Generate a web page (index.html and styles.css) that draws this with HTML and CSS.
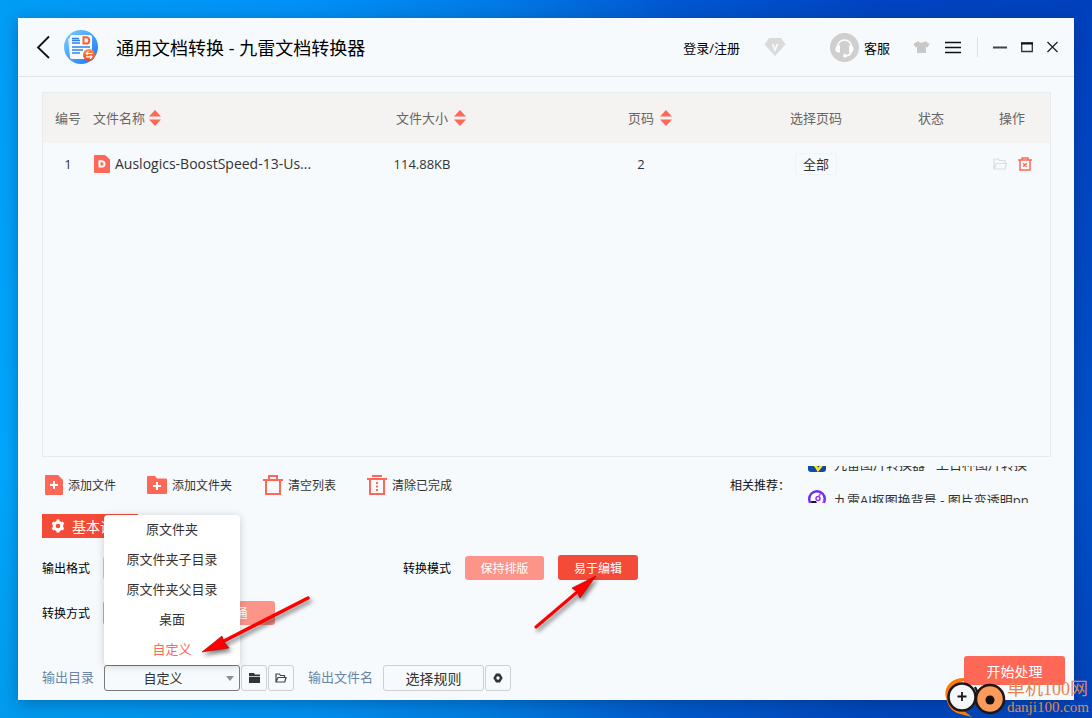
FILE: index.html
```html
<!DOCTYPE html>
<html lang="zh-CN">
<head>
<meta charset="utf-8">
<title>通用文档转换 - 九雷文档转换器</title>
<link rel="stylesheet" href="styles.css">
</head>
<body>
<div class="window">
  <header class="titlebar">
    <button class="plain" aria-label="返回"><svg width="14" height="24" viewBox="0 0 14 24"><path d="M13 1.500 2 12.500 13 23" fill="none" stroke="#111" stroke-width="1.800"/></svg></button>
    <svg class="logo" width="34" height="34" viewBox="0 0 34 34">
      <defs>
        <linearGradient id="disc" x1="0" y1="0" x2="1" y2="1"><stop offset="0" stop-color="#7dd0ff"/><stop offset="1" stop-color="#1672fb"/></linearGradient>
        <linearGradient id="dot" x1="0" y1="0" x2="0" y2="1"><stop offset="0" stop-color="#ff8a4e"/><stop offset="1" stop-color="#f4481a"/></linearGradient>
      </defs>
      <circle cx="17" cy="17" r="17" fill="url(#disc)"/>
      <path d="M4 9 8 7v21l-2-1z" fill="#d9ecff"/>
      <rect x="6" y="5" width="22" height="24" rx="2" fill="#f7faff"/>
      <path d="M8 8.500h7M8 10.500h8M8 13h8M8 17h18M8 20h11M8 23h8" stroke="#3182e8" stroke-width="1.500"/>
      <path d="M19.500 7.200h2.200c2.200 0 3.600 1.200 3.600 3.200s-1.400 3.200-3.600 3.200h-2.200z" fill="none" stroke="#f6622d" stroke-width="2"/>
      <circle cx="25" cy="25" r="6" fill="url(#dot)"/>
      <path d="M28.500 23.500h-6m2-2.200-2.200 2.200 1.500 1.200M22 26.800h6m-2 2 2-2-1.500-1.200" fill="none" stroke="#fff" stroke-width="1.200"/>
    </svg>
    <h1>通用文档转换 - 九雷文档转换器</h1>
    <nav class="top-actions">
      <a href="#login" class="login">登录/注册</a>
      <svg class="vip" width="22" height="20" viewBox="0 0 22 20"><path d="M5 1h12l4.500 6.500L11 19 .5 7.500z" fill="#dadada"/><path d="m8.500 7 2.500 6 2.500-6" fill="none" stroke="#f6fafc" stroke-width="1.800"/></svg>
      <a href="#support" class="support">
        <svg width="29" height="29" viewBox="0 0 29 29"><circle cx="14.500" cy="14.500" r="14.500" fill="#cfcfcf"/><path d="M7.500 17v-3a7 7 0 0 1 14 0v3c0 3.500-2 5.500-5.500 6" fill="none" stroke="#fff" stroke-width="1.600"/><path d="M8.500 12.500h1.500v7H8.500a3 3 0 0 1-3-3.500 3 3 0 0 1 3-3.500zM20.500 12.500H19v7h1.500a3 3 0 0 0 3-3.500 3 3 0 0 0-3-3.500z" fill="#fff"/><circle cx="15" cy="22.700" r="1.900" fill="#fff"/></svg>
        客服
      </a>
      <button class="plain skin" aria-label="换肤"><svg width="17" height="14" viewBox="0 0 17 14"><path d="M5 1 .5 4l2 3.500L4 6.800V13h9V6.800l1.500.7 2-3.500L12 1c-1 2-6 2-7 0z" fill="#c8c8c8"/></svg></button>
      <button class="plain menu-toggle" aria-label="菜单"><svg width="16" height="13" viewBox="0 0 16 13"><path d="M0 1.500h16M0 6.500h16M0 11.500h16" stroke="#111" stroke-width="1.600"/></svg></button>
      <span class="divider"></span>
      <button class="plain" aria-label="最小化"><svg width="14" height="12" viewBox="0 0 14 12"><path d="M0 6.500h14" stroke="#444" stroke-width="2"/></svg></button>
      <button class="plain" aria-label="最大化"><svg width="12" height="12" viewBox="0 0 12 12"><path d="M.700 2h10.600v8.500H.700z" fill="none" stroke="#333" stroke-width="1.300"/><path d="M0 2.500h12" stroke="#111" stroke-width="2"/></svg></button>
      <button class="plain" aria-label="关闭"><svg width="11" height="12" viewBox="0 0 11 12"><path d="m.5 1 10 10m0-10-10 10" stroke="#222" stroke-width="1.300"/></svg></button>
    </nav>
  </header>

  <main>
    <div class="file-list">
      <table>
        <colgroup><col class="c-no"><col><col class="c-size"><col class="c-page"><col class="c-range"><col class="c-state"><col class="c-op"></colgroup>
        <thead>
          <tr>
            <th>编号</th>
            <th class="left">文件名称<svg class="sort near" width="12" height="16" viewBox="0 0 12 16"><path d="m6 0 6 6.500H0zM0 9.500h12L6 16z"/></svg></th>
            <th class="sortable">文件大小<svg class="sort" width="12" height="16" viewBox="0 0 12 16"><path d="m6 0 6 6.500H0zM0 9.500h12L6 16z"/></svg></th>
            <th class="sortable">页码<svg class="sort" width="12" height="16" viewBox="0 0 12 16"><path d="m6 0 6 6.500H0zM0 9.500h12L6 16z"/></svg></th>
            <th>选择页码</th><th>状态</th><th class="last">操作</th>
          </tr>
        </thead>
        <tbody>
          <tr>
            <td>1</td>
            <td class="left"><div class="file"><svg width="16" height="18" viewBox="0 0 16 18"><path d="M1 0h10l5 4.500V17a1 1 0 0 1-1 1H1a1 1 0 0 1-1-1V1a1 1 0 0 1 1-1z" fill="#ff6757"/><path d="M5.500 6.200h2c2 0 3 1 3 2.700s-1 2.700-3 2.700h-2z" fill="none" stroke="#fff" stroke-width="2"/></svg>Auslogics-BoostSpeed-13-Us...</div></td>
            <td>114.88KB</td>
            <td>2</td>
            <td><button class="range">全部</button></td>
            <td></td>
            <td class="last"><div class="ops">
              <button class="plain" aria-label="打开文件夹"><svg width="14" height="12" viewBox="0 0 14 12"><path d="M1 11V1h4.500l1 1.500H12v3M1 11l2.500-5.500H13.500L12 11z" fill="none" stroke="#dcdcdc" stroke-width="1.200"/></svg></button>
              <button class="plain" aria-label="删除"><svg width="14" height="14" viewBox="0 0 14 14"><path d="M0 3h14M4 3V1h6v2M2 3v10h10V3M5.200 6.200l3.600 3.600m0-3.600L5.200 9.800" fill="none" stroke="#ff6757" stroke-width="1.500"/></svg></button>
            </div></td>
          </tr>
        </tbody>
      </table>
    </div>

    <div class="toolbar">
      <button class="tool"><svg width="18" height="20" viewBox="0 0 18 20"><path d="M1 0h12l5 5v14a1 1 0 0 1-1 1H1a1 1 0 0 1-1-1V1a1 1 0 0 1 1-1z" fill="#ff6757"/><path d="M9 6v8M5 10h8" stroke="#fff" stroke-width="2"/></svg>添加文件</button>
      <button class="tool"><svg width="20" height="18" viewBox="0 0 20 18"><path d="M1 0h7l2 2.500h9a1 1 0 0 1 1 1V17a1 1 0 0 1-1 1H1a1 1 0 0 1-1-1V1a1 1 0 0 1 1-1z" fill="#ff6757"/><path d="M10 6v8M6 10h8" stroke="#fff" stroke-width="2"/></svg>添加文件夹</button>
      <button class="tool"><svg width="20" height="20" viewBox="0 0 20 20"><path d="M0 5h20M6 4.500V1h8v3.500M3 5v14h14V5" fill="none" stroke="#ff6757" stroke-width="2"/></svg>清空列表</button>
      <button class="tool"><svg width="20" height="20" viewBox="0 0 20 20"><path d="M0 4h20M5 1h10M3 4v15h14V4" fill="none" stroke="#ff6757" stroke-width="2"/><path d="M10 7v9" stroke="#ff6757" stroke-width="2" stroke-dasharray="2 1.500"/></svg>清除已完成</button>
      <span class="related">相关推荐：</span>
      <div class="ticker">
        <div class="ticker-track">
          <a href="#image"><svg width="18" height="18" viewBox="0 0 18 18"><rect width="18" height="18" rx="3" fill="#0a4bab"/><path d="M2 9c4 0 6 3 8 7l4-5" fill="none" stroke="#ffe51f" stroke-width="2.500"/></svg>九雷图片转换器 - 上百种图片转换</a>
          <a href="#matting"><svg width="18" height="18" viewBox="0 0 18 18"><circle cx="9" cy="9" r="7.800" fill="#fff" stroke="#6530f4" stroke-width="2.400"/><path d="M3 11h5l2 5H4z" fill="#18123b"/><circle cx="10" cy="8.500" r="2" fill="none" stroke="#9b35ef" stroke-width="1.500"/><path d="m11 6 1.500-2.500M16 9l-1 5" stroke="#d63aed" stroke-width="1.500"/></svg>九雷AI抠图换背景 - 图片变透明pn</a>
        </div>
      </div>
    </div>

    <button class="tab"><svg width="14" height="14" viewBox="0 0 14 14"><circle cx="7" cy="7" r="3.800" fill="none" stroke="#fff" stroke-width="3"/><path d="M7 .5v2M7 11.500v2M1.400 3.700l1.700 1M10.900 9.300l1.700 1M1.400 10.300l1.700-1M10.900 4.700l1.700-1" stroke="#fff" stroke-width="3"/></svg>基本设置</button>

    <div class="settings">
      <label for="format">输出格式</label>
      <div class="options"><select id="format" class="format"><option>DOCX</option></select></div>
      <span>转换模式</span>
      <div class="options">
        <button class="choice">保持排版</button>
        <div class="marked">
          <button class="choice active">易于编辑</button>
          <svg class="arrow arrow-mode" width="70" height="60" viewBox="0 0 70 60"><path d="M5 54 45 20" stroke="#f00" stroke-width="3" stroke-linecap="round"/><path d="M65 3 41 15l5 4 3 6z" fill="#f00" stroke="#a00" stroke-width=".6"/></svg>
        </div>
      </div>
      <span>转换方式</span>
      <div class="options"><button class="choice">增强</button><button class="choice">普通</button></div>
    </div>

    <footer>
      <div class="output">
        <label for="dir" class="dir-label">输出目录</label>
        <div class="picker">
          <select id="dir"><option>自定义</option><option>原文件夹</option><option>桌面</option></select>
          <svg class="caret" width="8" height="5" viewBox="0 0 8 5"><path d="M0 0h8L4 5z" fill="#8b8f91"/></svg>
          <div class="menu">
            <button>原文件夹</button><button>原文件夹子目录</button><button>原文件夹父目录</button><button>桌面</button><button class="chosen">自定义</button>
          </div>
          <svg class="arrow arrow-dir" width="120" height="68" viewBox="0 0 120 68"><path d="M110 5 26 48" stroke="#f00" stroke-width="3.500" stroke-linecap="round"/><path d="M4 59 24 43l2 6 5 6z" fill="#f00" stroke="#a00" stroke-width=".6"/></svg>
        </div>
        <button class="square" aria-label="选择目录"><svg width="11" height="10" viewBox="0 0 11 10"><path d="M0 0h5l1 1.500h5V3H0zM0 3.800h11V10H0z" fill="#333"/></svg></button>
        <button class="square" aria-label="打开目录"><svg width="12" height="10" viewBox="0 0 12 10"><path d="M1 9V1h3.500l1 1.500h4v2M1 9l2-4.500h8L9.800 9z" fill="none" stroke="#444" stroke-width="1.200"/></svg></button>
        <span class="name-label">输出文件名</span>
        <button class="rule">选择规则</button>
        <button class="square" aria-label="规则设置"><svg width="10" height="10" viewBox="0 0 10 10"><path d="M3 .5h4L9.700 5 7 9.500H3L.3 5z" fill="#333"/><circle cx="5" cy="5" r="1.700" fill="#fff"/></svg></button>
      </div>
      <button class="start">开始处理</button>
    </footer>
  </main>
</div>

<div class="brand">
  <svg width="64" height="42" viewBox="0 0 64 42">
    <path d="M20 2C5 2-2 14 3 25c2 7 6 12 17 14l8 2-8-6C5 33 1 17 12 8l8-3z" fill="#ff7a00"/>
    <circle cx="18" cy="21" r="13.500" fill="#f5f8fa" stroke="#1d1717" stroke-width="2.500"/>
    <path d="M18 16v9M13.500 20.500h9" stroke="#1d1717" stroke-width="1.800"/>
    <path d="M31 11l3 6M41 10l-5 6" fill="none" stroke="#1d1717" stroke-width="2.200"/>
    <circle cx="46" cy="23" r="14" fill="#fa9a5b" stroke="#1d1717" stroke-width="2.500"/><circle cx="46" cy="24" r="4.500" fill="#111"/>
  </svg>
  <div class="brand-text"><span class="brand-name">单机100网</span><span>danji100.com</span></div>
</div>
</body>
</html>
```
FILE: styles.css
```css
* { box-sizing: border-box; }

body {
  margin: 0;
  min-height: 100vh;
  padding: 18px;
  display: flex;
  font-family: "Open Sans", "Noto Sans CJK SC", sans-serif;
  font-size: 13px;
  color: #333;
  background:
    linear-gradient(180deg, rgba(0, 60, 130, 0.05), rgba(0, 200, 255, 0.12) 65%, rgba(0, 90, 110, 0.1)),
    linear-gradient(90deg, #00a2fa 0, #0095fc 28%, #007eea 45%, #0058d4 62%, #0044c4 80%, #0040c0 100%);
  position: relative;
  overflow: hidden;
}

button, select { font: inherit; color: inherit; margin: 0; padding: 0; border: 0; background: none; }
button { white-space: nowrap; }
a { color: inherit; text-decoration: none; }
svg { display: block; flex: none; }
.plain { display: flex; align-items: center; }

.window {
  flex: 1;
  min-width: 0;
  display: flex;
  flex-direction: column;
  background: #f6fafc;
  box-shadow: 0 3px 14px rgba(0, 30, 80, 0.35);
}

.titlebar {
  display: flex;
  align-items: center;
  height: 59px;
  padding: 0 16px 0 18px;
  border-bottom: 1px solid #e1e4e6;
  color: #000;
}
.logo { margin-left: 14px; }
h1 { margin: 0 0 0 18px; font-size: 18px; font-weight: 400; }

.top-actions { display: flex; align-items: center; gap: 14px; margin-left: auto; }
.login { margin-right: 10px; }
.vip { margin-right: 30px; }
.support { display: flex; align-items: center; gap: 5px; }
.skin { margin-left: 9px; }
.menu-toggle { margin-left: 1px; }
.divider { width: 1px; height: 20px; margin: 0 1px 0 2px; background: #dcdfe1; }

main { flex: 1; display: flex; flex-direction: column; padding: 15px 24px 0; }

.file-list { flex: 1; border: 1px solid #e8ebec; margin-right: -1px; }
table { width: 100%; table-layout: fixed; border-collapse: collapse; }
.c-no { width: 50px; }
.c-size { width: 220px; }
.c-page { width: 218px; }
.c-range { width: 132px; }
.c-state { width: 98px; }
.c-op { width: 70px; }
th { height: 50px; padding: 0 0 2px; font-weight: 400; color: #666; background: #f5f3f2; text-align: center; white-space: nowrap; }
td { height: 43px; padding: 0 0 2px; text-align: center; white-space: nowrap; }
.left { text-align: left; }
.last { padding-right: 6px; }
.sortable { padding-left: 18px; }
.sort { display: inline-block; margin-left: 6px; vertical-align: -3px; fill: #ff6757; }
.near { margin-left: 4px; }
.file { display: flex; align-items: center; gap: 5px; padding-left: 1px; font-size: 14px; line-height: 18px; }
.range { width: 42px; height: 22px; border: 1px solid #f0f3f4; }
.ops { display: flex; align-items: center; justify-content: center; gap: 11px; }

.toolbar { display: flex; align-items: center; height: 37px; margin-top: 9px; padding-left: 3px; font-size: 12px; }
.tool { display: flex; align-items: center; gap: 5px; margin-right: 31px; }
.related { margin-left: auto; color: #111; }
.ticker { width: 225px; height: 37px; margin: 0 17px 0 18px; overflow: hidden; font-size: 13px; }
.ticker-track { display: flex; flex-direction: column; margin-top: -21px; }
.ticker a { display: flex; align-items: center; gap: 8px; height: 36px; white-space: nowrap; }

.tab {
  display: flex;
  align-items: center;
  align-self: flex-start;
  gap: 7px;
  width: 96px;
  height: 24px;
  margin-top: 11px;
  padding-left: 9px;
  overflow: hidden;
  font-size: 14px;
  color: #fff;
  background: #f44b39;
}

.settings {
  display: grid;
  grid-template-columns: 61px 300px 62px 1fr;
  row-gap: 20px;
  align-items: center;
  margin-top: 17px;
  font-size: 12px;
  color: #000;
}
.options { display: flex; align-items: center; gap: 14px; height: 25px; }
.format { width: 130px; height: 24px; border: 1px solid #ccc; border-radius: 3px; }
.choice { display: block; width: 79px; height: 24px; border-radius: 3px; color: #fff; background: #fc9489; }
.active { width: 80px; height: 25px; background: #f44b39; }
.marked { position: relative; }

footer { display: flex; align-items: flex-start; justify-content: space-between; height: 44px; margin: 31px -15px 0 0; }
.output { display: flex; align-items: center; height: 26px; margin-top: 9px; }
.dir-label, .name-label { padding-bottom: 4px; color: #6985a5; }
.dir-label { width: 62px; }
.name-label { margin: 0 10px 0 14px; }
.picker { position: relative; width: 136px; height: 26px; }
.picker select {
  width: 100%;
  height: 100%;
  padding-right: 18px;
  appearance: none;
  border: 1px solid #777b7d;
  border-radius: 3px;
  text-align: center;
  text-align-last: center;
}
.caret { position: absolute; right: 6px; top: 11px; }
.menu {
  position: absolute;
  left: 0;
  bottom: 100%;
  width: 100%;
  display: flex;
  flex-direction: column;
  border-radius: 4px;
  background: #fff;
  box-shadow: 0 1px 8px rgba(0, 0, 0, 0.18);
}
.menu button { height: 30px; padding-bottom: 3px; }
.menu .chosen { color: #ff6757; }
.square, .rule { height: 26px; margin-left: 1px; border: 1px solid #ccd0d2; border-radius: 3px; }
.square { display: flex; align-items: center; justify-content: center; width: 26px; }
.rule { width: 101px; margin-left: 0; font-size: 14px; }
.start { width: 101px; height: 29px; border-radius: 3px; font-size: 14px; color: #fff; background: #ff6757; }

.arrow { position: absolute; pointer-events: none; filter: drop-shadow(2px 3px 2px rgba(0, 0, 0, 0.5)); }
.arrow-mode { left: -27px; top: 18px; }
.arrow-dir { left: 94px; bottom: 30px; }

.brand { position: absolute; right: 3px; bottom: 0; display: flex; align-items: center; color: #e0864f; font-family: "Liberation Serif", "Noto Sans CJK SC", serif; }
.brand-text { display: flex; flex-direction: column; margin-left: -1px; font-size: 15px; line-height: 16px; }
.brand-name { font-size: 18px; line-height: 20px; }
```
